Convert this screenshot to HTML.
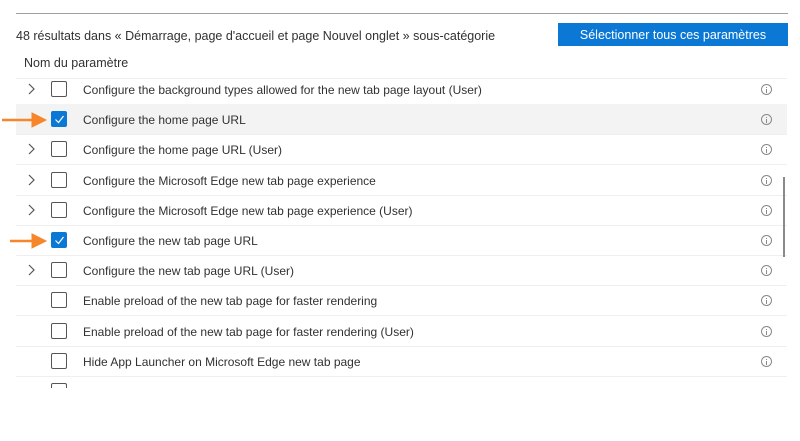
<!DOCTYPE html><html><head><style>
body{margin:0;width:800px;height:441px;background:#fff;font-family:"Liberation Sans",sans-serif;color:#323130;position:relative;overflow:hidden}
.a{position:absolute}
.row{position:absolute;left:16px;width:771px;height:30px;border-bottom:1px solid #efefef;font-size:12px}
.row .t{position:absolute;left:67px;top:9px;white-space:nowrap}
.cb{position:absolute;left:35px;top:7px;width:16px;height:16px;border:1px solid #555;border-radius:2px;box-sizing:border-box;background:#fff}
.cb.on{background:#0a78d4;border-color:#0a78d4}
.ch{position:absolute;left:10px;top:9px}
.inf{position:absolute;left:745px;top:10px;width:11px;height:11px;border:1px solid #888;border-radius:50%;box-sizing:border-box}
.inf:after{content:"";position:absolute;left:4px;top:4px;width:1px;height:4px;background:#888}
.inf:before{content:"";position:absolute;left:4px;top:2px;width:1px;height:1px;background:#888}
</style></head><body>
<div class="a" style="left:16px;top:13px;width:772px;height:1px;background:#a0a0a0"></div>
<div class="a" style="left:16px;top:29px;font-size:12.5px">48 résultats dans « Démarrage, page d'accueil et page Nouvel onglet » sous-catégorie</div>
<div class="a" style="left:558px;top:23px;width:230px;height:23px;background:#0a78d4;color:#fff;font-size:12.5px;text-align:center;line-height:25px">Sélectionner tous ces paramètres</div>
<div class="a" style="left:24px;top:56px;font-size:12.5px">Nom du paramètre</div>
<div class="a" style="left:16px;top:78px;width:771px;height:1px;background:#efefef"></div>
<div id="list"></div>
<div class="a" style="left:783px;top:177px;width:2px;height:80px;background:#8a8a8a"></div>
<svg class="a" style="left:0;top:110px" width="50" height="140"><g fill="#f7862a" stroke="#f7862a"><line x1="2" y1="10" x2="34" y2="10" stroke-width="2.5"/><path d="M32 3 L46 10 L32 17Z"/><line x1="10" y1="131" x2="34" y2="131" stroke-width="2.5"/><path d="M32 124 L46 131 L32 138Z"/></g></svg>
<script>
var rows=[["Configure the background types allowed for the new tab page layout (User)",1,0],["Configure the home page URL",0,1],["Configure the home page URL (User)",1,0],["Configure the Microsoft Edge new tab page experience",1,0],["Configure the Microsoft Edge new tab page experience (User)",1,0],["Configure the new tab page URL",0,1],["Configure the new tab page URL (User)",1,0],["Enable preload of the new tab page for faster rendering",0,0],["Enable preload of the new tab page for faster rendering (User)",0,0],["Hide App Launcher on Microsoft Edge new tab page",0,0]];
var h="";rows.forEach(function(r,i){var top=74+i*30.2;h+='<div class="row" style="top:'+top+'px;'+(i==1?'background:#f3f3f3':'')+'">'+(r[1]?'<svg class="ch" width="10" height="12"><path d="M3 1 L8 6 L3 11" fill="none" stroke="#555" stroke-width="1.2"/></svg>':'')+'<div class="cb'+(r[2]?' on':'')+'">'+(r[2]?'<svg width="14" height="14" style="position:absolute;left:0;top:0"><path d="M3.5 7.5 L6.5 10.5 L11.5 4" fill="none" stroke="#fff" stroke-width="1.2"/></svg>':'')+'</div><div class="t">'+r[0]+'</div><div class="inf"></div></div>'});
h+='<div class="a" style="left:51px;top:383px;width:16px;height:5px;border:1px solid #555;border-bottom:none;border-radius:2px 2px 0 0;box-sizing:border-box"></div>';
document.getElementById("list").innerHTML=h;
</script>
</body></html>
